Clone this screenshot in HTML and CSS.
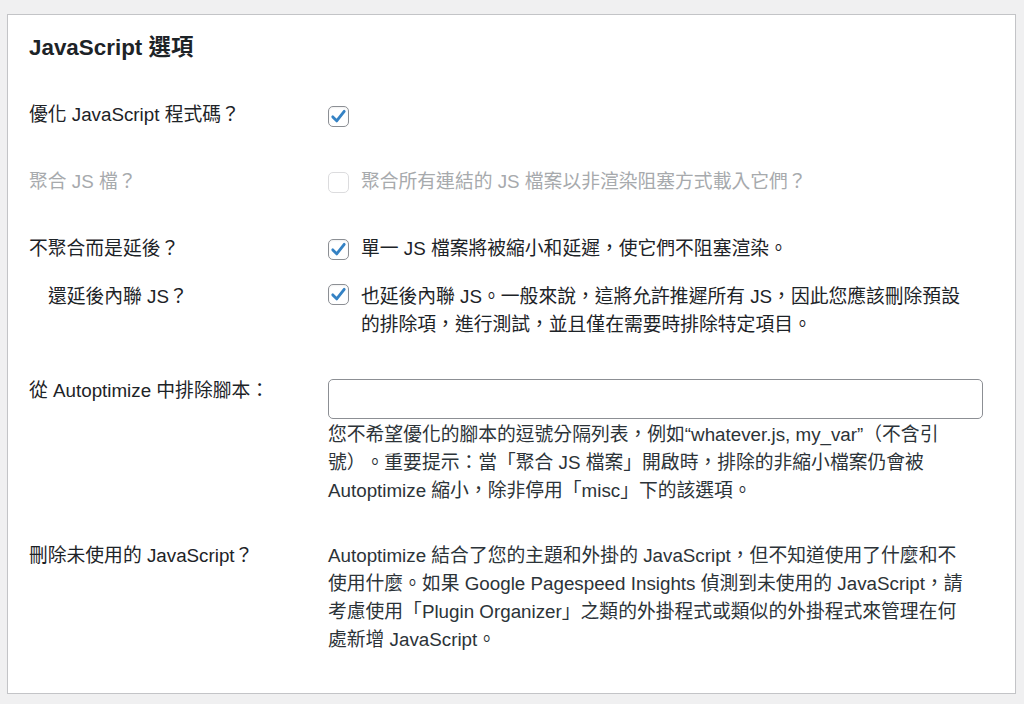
FILE: index.html
```html
<!DOCTYPE html>
<html lang="zh-Hant">
<head>
<meta charset="utf-8">
<title>JavaScript 選項</title>
<link rel="stylesheet" href="styles.css">
</head>
<body>
<div class="card">
  <h2 class="title">JavaScript 選項</h2>

  <div class="row r1">
    <div class="label">優化 JavaScript 程式碼？</div>
    <div class="field">
      <label class="check-line">
        <span class="cb checked"><svg viewBox="0 0 20 20" width="19" height="19"><path d="M4 10.4 L8.1 14.6 L16 4.6" fill="none" stroke="#3582c4" stroke-width="3" stroke-linecap="round" stroke-linejoin="round"/></svg></span>
      </label>
    </div>
  </div>

  <div class="row r2 disabled">
    <div class="label">聚合 JS 檔？</div>
    <div class="field">
      <label class="check-line">
        <span class="cb off"></span>
        <span class="ctext">聚合所有連結的 JS 檔案以非渲染阻塞方式載入它們？</span>
      </label>
    </div>
  </div>

  <div class="row r3">
    <div class="label">不聚合而是延後？</div>
    <div class="field">
      <label class="check-line">
        <span class="cb checked"><svg viewBox="0 0 20 20" width="19" height="19"><path d="M4 10.4 L8.1 14.6 L16 4.6" fill="none" stroke="#3582c4" stroke-width="3" stroke-linecap="round" stroke-linejoin="round"/></svg></span>
        <span class="ctext">單一 JS 檔案將被縮小和延遲，使它們不阻塞渲染。</span>
      </label>
    </div>
  </div>

  <div class="row r4">
    <div class="label indent">還延後內聯 JS？</div>
    <div class="field">
      <label class="check-line">
        <span class="cb checked"><svg viewBox="0 0 20 20" width="19" height="19"><path d="M4 10.4 L8.1 14.6 L16 4.6" fill="none" stroke="#3582c4" stroke-width="3" stroke-linecap="round" stroke-linejoin="round"/></svg></span>
        <span class="ctext">也延後內聯 JS。一般來說，這將允許推遲所有 JS，因此您應該刪除預設<br>的排除項，進行測試，並且僅在需要時排除特定項目。</span>
      </label>
    </div>
  </div>

  <div class="row r5">
    <div class="label">從 Autoptimize 中排除腳本：</div>
    <div class="field">
      <input class="text-input" type="text" value="">
      <p class="desc">您不希望優化的腳本的逗號分隔列表，例如“whatever.js, my_var”（不含引<br>號）。重要提示：當「聚合 JS 檔案」開啟時，排除的非縮小檔案仍會被<br>Autoptimize 縮小，除非停用「misc」下的該選項。</p>
    </div>
  </div>

  <div class="row r6">
    <div class="label">刪除未使用的 JavaScript？</div>
    <div class="field">
      <p class="desc">Autoptimize 結合了您的主題和外掛的 JavaScript，但不知道使用了什麼和不<br>使用什麼。如果 Google Pagespeed Insights 偵測到未使用的 JavaScript，請<br>考慮使用「Plugin Organizer」之類的外掛程式或類似的外掛程式來管理在何<br>處新增 JavaScript。</p>
    </div>
  </div>
</div>
</body>
</html>
```

FILE: styles.css
```css
html, body {
  margin: 0;
  padding: 0;
  background: #f0f0f1;
}

body {
  font-family: "Liberation Sans", "Noto Sans CJK TC", sans-serif;
  font-size: 18.8px;
  line-height: 28px;
  color: #1d2327;
  text-spacing-trim: space-all;
}

.card {
  margin: 14px 8px 0 7px;
  background: #fff;
  border: 1px solid #c3c4c7;
  box-shadow: 0 1px 1px rgba(0, 0, 0, 0.04);
  padding: 18px 21px 19px 21px;
  height: 641px;
  box-sizing: content-box;
}

.title {
  margin: 0 0 18.5px 0;
  font-size: 22.4px;
  line-height: 30px;
  font-weight: 700;
  color: #1d2327;
}

.row {
  display: grid;
  grid-template-columns: 299px 655px;
  padding: 19.5px 0;
}

.label {
  font-weight: 400;
}

.label.indent {
  padding-left: 19px;
}

.check-line {
  display: flex;
  align-items: flex-start;
  gap: 12px;
}

.cb {
  flex: none;
  width: 19px;
  height: 19px;
  border: 1px solid #8c8f94;
  border-radius: 5px;
  background: #fff;
  display: flex;
  align-items: center;
  justify-content: center;
  margin-top: 4px;
  box-shadow: inset 0 1px 2px rgba(0, 0, 0, 0.06);
}

.r1 .cb {
  margin-top: 5px;
}

.cb.off {
  border-color: #dcdcde;
  box-shadow: none;
}

.r4 .cb {
  margin-top: 1.5px;
}

.disabled .label,
.disabled .ctext {
  color: #a7aaad;
}

.r3 {
  padding-bottom: 0;
}

.r4 {
  padding-bottom: 19px;
}

.r5 {
  padding-top: 19px;
  padding-bottom: 37px;
}

.r5 .field {
  padding-top: 2px;
}

.text-input {
  display: block;
  box-sizing: border-box;
  width: 655px;
  height: 40px;
  margin: 0;
  border: 1px solid #8c8f94;
  border-radius: 5px;
  background: #fff;
  font: inherit;
  padding: 0 10px;
}

.desc {
  margin: 2px 0 0 0;
  color: #2c3338;
  white-space: nowrap;
}

.r6 {
  padding-top: 0;
  padding-bottom: 0;
}

.r6 .desc {
  margin: 0;
}
```
